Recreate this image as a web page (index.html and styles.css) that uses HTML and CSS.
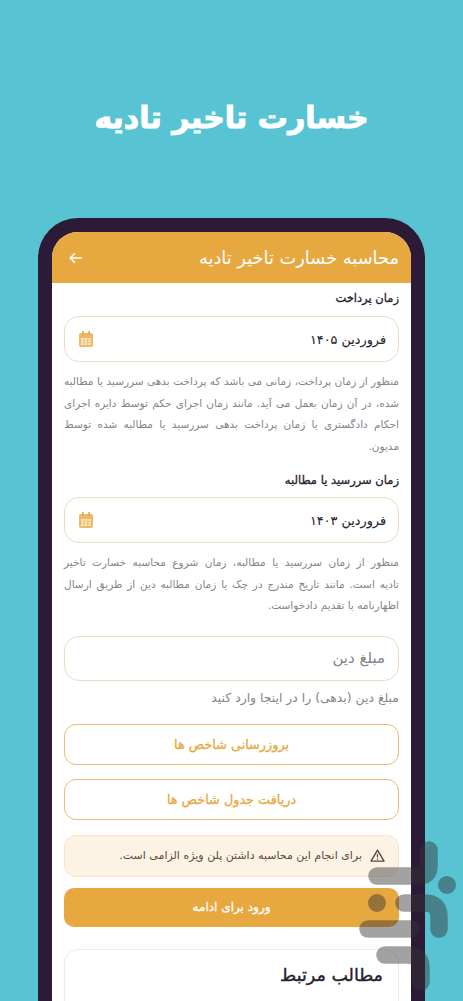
FILE: index.html
```html
<!DOCTYPE html>
<html lang="fa" dir="rtl">
<head>
    <meta charset="UTF-8">
    <meta name="viewport" content="width=device-width, initial-scale=1.0">
    <title>خسارت تاخیر تادیه</title>
    <link rel="stylesheet" href="styles.css">
</head>
<body>
    <div class="hero-title">خسارت تاخیر تادیه</div>

    <div class="phone">
        <div class="screen">
            <div class="app-bar">
                <div class="app-bar-title">محاسبه خسارت تاخیر تادیه</div>
                <svg class="back-icon" viewBox="0 0 14 12" width="14" height="12">
                    <path d="M13 6H1.5M6 1.2 1.2 6 6 10.8" fill="none" stroke="#fff" stroke-width="1.5"/>
                </svg>
            </div>

            <div class="content">
                <div class="field-label">زمان پرداخت</div>
                <div class="date-field">
                    <span class="date-value">فروردین ۱۴۰۵</span>
                    <svg class="calendar-icon" viewBox="0 0 14 16" width="14" height="16">
                        <rect x="0" y="2" width="14" height="14" rx="2" fill="#efb766"/>
                        <rect x="3" y="0" width="1.6" height="4" fill="#e8a840"/>
                        <rect x="9.4" y="0" width="1.6" height="4" fill="#e8a840"/>
                        <path d="M2 7h10v7H2z" fill="#fbe6c6"/>
                        <path d="M2 9.3h10M2 11.7h10M5.3 7v7M8.7 7v7" stroke="#efb766" stroke-width=".7"/>
                    </svg>
                </div>
                <p class="hint">
                    <span class="hint-line">منظور از زمان پرداخت، زمانی می باشد که پرداخت بدهی سررسید یا مطالبه</span>
                    <span class="hint-line">شده، در آن زمان بعمل می آید. مانند زمان اجرای حکم توسط دایره اجرای</span>
                    <span class="hint-line">احکام دادگستری یا زمان پرداخت بدهی سررسید یا مطالبه شده توسط</span>
                    مدیون.
                </p>

                <div class="field-label second">زمان سررسید یا مطالبه</div>
                <div class="date-field">
                    <span class="date-value">فروردین ۱۴۰۳</span>
                    <svg class="calendar-icon" viewBox="0 0 14 16" width="14" height="16">
                        <rect x="0" y="2" width="14" height="14" rx="2" fill="#efb766"/>
                        <rect x="3" y="0" width="1.6" height="4" fill="#e8a840"/>
                        <rect x="9.4" y="0" width="1.6" height="4" fill="#e8a840"/>
                        <path d="M2 7h10v7H2z" fill="#fbe6c6"/>
                        <path d="M2 9.3h10M2 11.7h10M5.3 7v7M8.7 7v7" stroke="#efb766" stroke-width=".7"/>
                    </svg>
                </div>
                <p class="hint">
                    <span class="hint-line">منظور از زمان سررسید یا مطالبه، زمان شروع محاسبه خسارت تاخیر</span>
                    <span class="hint-line">تادیه است. مانند تاریخ مندرج در چک یا زمان مطالبه دین از طریق ارسال</span>
                    اظهارنامه یا تقدیم دادخواست.
                </p>

                <div class="amount-field">مبلغ دین</div>
                <div class="helper">مبلغ دین (بدهی) را در اینجا وارد کنید</div>

                <div class="outline-btn">بروزرسانی شاخص ها</div>
                <div class="outline-btn">دریافت جدول شاخص ها</div>

                <div class="notice">
                    <svg class="notice-icon" viewBox="0 0 16 14" width="15" height="13">
                        <path d="M8 1.2 15 13H1Z" fill="none" stroke="#5a4a38" stroke-width="1.5" stroke-linejoin="round"/>
                        <path d="M8 5v4.2M8 10.2v1.3" stroke="#5a4a38" stroke-width="1.3"/>
                    </svg>
                    <span>برای انجام این محاسبه داشتن پلن ویژه الزامی است.</span>
                </div>

                <div class="primary-btn">ورود برای ادامه</div>

                <div class="related-card">
                    <div class="related-title">مطالب مرتبط</div>
                </div>
            </div>
        </div>
    </div>

    <svg class="watermark" viewBox="0 0 463 1001" width="463" height="1001">
        <g fill="none" stroke="#333" stroke-width="17.5" stroke-linecap="round">
            <path d="M429 850V866Q429 876 419 876H377"/>
            <path d="M404 903H425Q439 903 439 917V929"/>
            <path d="M368 929H411"/>
            <path d="M385 955H408Q421 955 421 968V982"/>
        </g>
        <circle cx="447" cy="885" r="9" fill="#333"/>
        <circle cx="377" cy="903" r="9" fill="#333"/>
    </svg>
</body>
</html>
```

FILE: styles.css
```css
body, html {
    margin: 0;
    padding: 0;
    width: 100%;
    height: 100%;
    overflow: hidden;
}
body {
    background-color: #58c3d3;
    font-family: 'DejaVu Sans', sans-serif;
    position: relative;
}
.hero-title {
    height: 218px;
    box-sizing: border-box;
    padding-top: 96px;
    text-align: center;
    color: #ffffff;
    font-size: 30px;
    line-height: 44px;
    font-weight: bold;
    -webkit-text-stroke: 1px #ffffff;
}
.phone {
    margin: 0 38px;
    height: 800px;
    box-sizing: border-box;
    padding: 14px 14px 0;
    background-color: #2c1a36;
    border-radius: 40px 40px 0 0;
}
.screen {
    height: 100%;
    background-color: #ffffff;
    border-radius: 26px 26px 0 0;
    overflow: hidden;
}
.app-bar {
    height: 51px;
    background-color: #e8a840;
    display: flex;
    align-items: center;
    justify-content: space-between;
    padding: 0 12px 0 17px;
}
.app-bar-title {
    color: #ffffff;
    font-size: 17.8px;
}
.content {
    padding: 6px 12px 0;
}
.field-label {
    color: #26222e;
    font-size: 11.5px;
    line-height: 18px;
    height: 27px;
    -webkit-text-stroke: 0.3px #26222e;
}
.field-label.second {
    margin-top: 14px;
    height: 26px;
}
.date-field {
    height: 46px;
    box-sizing: border-box;
    border: 1px solid #ecdcc4;
    border-radius: 15px;
    display: flex;
    align-items: center;
    justify-content: space-between;
    padding: 0 12px 0 14px;
}
.date-value {
    color: #26222e;
    font-size: 12.8px;
    -webkit-text-stroke: 0.1px #26222e;
}
.hint {
    margin: 9px 0 0;
    color: #85848c;
    font-size: 10.5px;
    line-height: 21.5px;
}
.hint-line {
    display: block;
    text-align: justify;
    text-align-last: justify;
}
.amount-field {
    margin-top: 19px;
    height: 45px;
    box-sizing: border-box;
    border: 1px solid #ecdcc4;
    border-radius: 15px;
    padding: 0 13px;
    display: flex;
    align-items: center;
    color: #85848c;
    font-size: 15px;
}
.helper {
    margin-top: 7px;
    color: #85848c;
    font-size: 12.4px;
    line-height: 20px;
}
.outline-btn {
    margin-top: 16px;
    height: 41px;
    box-sizing: border-box;
    border: 1px solid #edbb74;
    border-radius: 12px;
    display: flex;
    align-items: center;
    justify-content: center;
    color: #e8a840;
    font-size: 12.8px;
    -webkit-text-stroke: 0.3px #e8a840;
}
.outline-btn + .outline-btn {
    margin-top: 14px;
}
.notice {
    margin-top: 15px;
    height: 42px;
    box-sizing: border-box;
    border: 1px solid #fae3c4;
    border-radius: 12px;
    background-color: #fdf3e5;
    display: flex;
    align-items: center;
    gap: 8px;
    padding: 0 13px;
    color: #5a4a38;
    font-size: 11px;
}
.primary-btn {
    margin-top: 11px;
    height: 39px;
    border-radius: 10px;
    background-color: #e8a840;
    display: flex;
    align-items: center;
    justify-content: center;
    color: #ffffff;
    font-size: 12px;
    -webkit-text-stroke: 0.3px #ffffff;
}
.related-card {
    margin-top: 22px;
    height: 120px;
    box-sizing: border-box;
    border: 1px solid #ececec;
    border-radius: 14px;
    padding: 9px 15px;
}
.related-title {
    color: #26222e;
    font-size: 17.5px;
    line-height: 32px;
    -webkit-text-stroke: 0.4px #26222e;
}
.watermark {
    position: absolute;
    top: 0;
    left: 0;
    opacity: 0.45;
    pointer-events: none;
}
```
